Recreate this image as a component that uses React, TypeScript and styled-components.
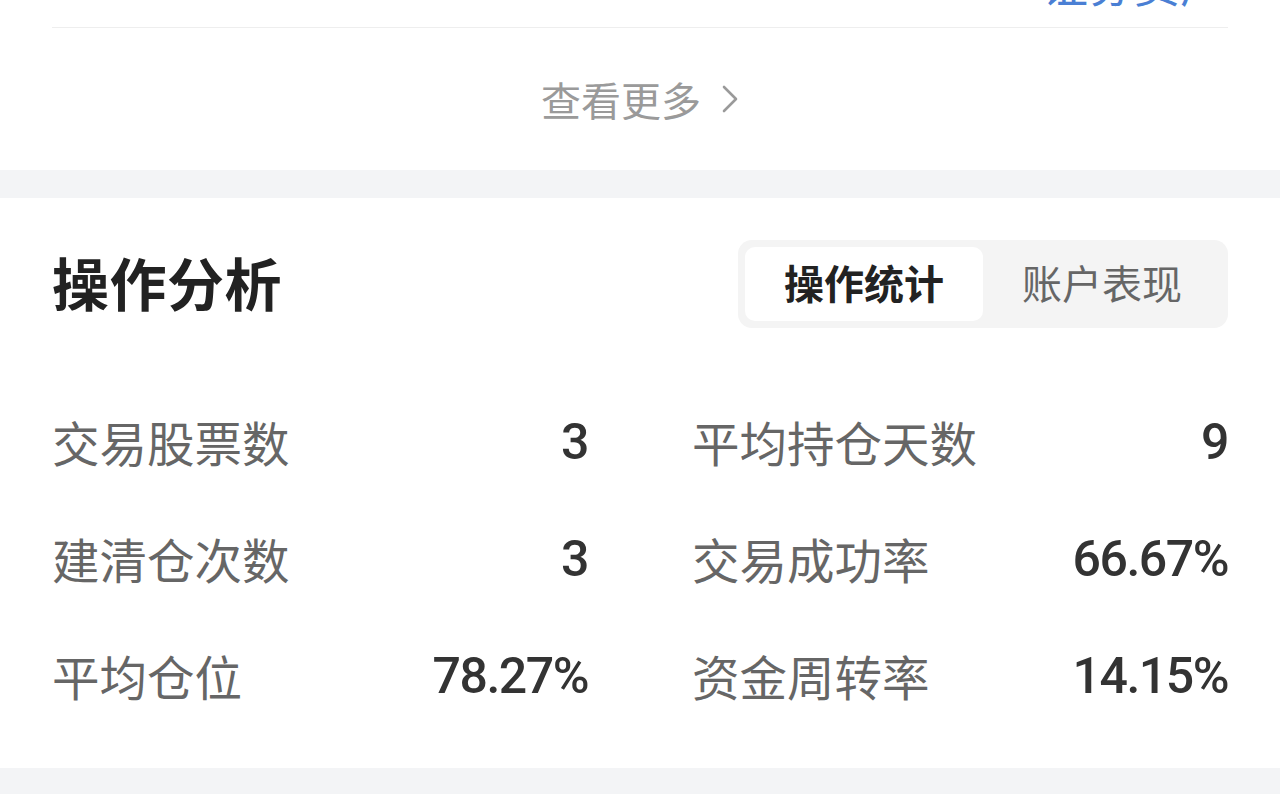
import styled, { createGlobalStyle } from "styled-components";

const GlobalStyle = createGlobalStyle`
  html, body {
    margin: 0;
    padding: 0;
    background: #ffffff;
    font-family: "Noto Sans CJK SC", "Noto Sans", sans-serif;
  }
  * {
    box-sizing: border-box;
  }
`;

const Page = styled.div`
  width: 1280px;
  height: 794px;
  overflow: hidden;
  display: flex;
  flex-direction: column;
  background: #f3f4f6;
`;

const TopCard = styled.section`
  background: #ffffff;
  padding: 0 52px;
  height: 170px;
  display: flex;
  flex-direction: column;
`;

// the row above is scrolled off; only the bottom of its link shows
const CutRow = styled.div`
  height: 28px;
  display: flex;
  justify-content: flex-end;
  align-items: flex-start;
  border-bottom: 1px solid #eeeeee;
`;

const CutLink = styled.span`
  font-size: 46px;
  line-height: 46px;
  color: #4a7fd4;
  margin-top: -41px;
  margin-right: 2px;
`;

const MoreRow = styled.div`
  flex: 1;
  display: flex;
  align-items: center;
  justify-content: center;
  gap: 20px;
  color: #9a9a9a;
  font-size: 40px;
  line-height: 1;
`;

const Band = styled.div<{ $h: number }>`
  height: ${(p) => p.$h}px;
  flex-shrink: 0;
`;

const Card = styled.section`
  background: #ffffff;
  padding: 42px 52px 0;
  height: 570px;
  flex-shrink: 0;
`;

const Header = styled.div`
  display: flex;
  align-items: center;
  justify-content: space-between;
  height: 88px;
`;

const Title = styled.h2`
  margin: 0 0 6px;
  font-size: 57px;
  font-weight: 700;
  color: #222222;
  letter-spacing: 0.5px;
`;

const Tabs = styled.div`
  width: 490px;
  height: 88px;
  padding: 7px;
  display: flex;
  background: #f4f4f4;
  border-radius: 14px;
`;

const Tab = styled.div<{ $active?: boolean }>`
  flex: 1;
  display: flex;
  align-items: center;
  justify-content: center;
  border-radius: 10px;
  font-size: 40px;
  padding-bottom: 4px;
  background: ${(p) => (p.$active ? "#ffffff" : "transparent")};
  color: ${(p) => (p.$active ? "#222222" : "#666666")};
  font-weight: ${(p) => (p.$active ? 700 : 400)};
`;

const Stats = styled.div`
  display: grid;
  grid-template-columns: 536px 536px;
  column-gap: 104px;
  margin-top: 55px;
`;

const Stat = styled.div`
  height: 117px;
  display: flex;
  align-items: center;
  justify-content: space-between;
`;

const Label = styled.span`
  font-size: 47.5px;
  color: #666666;
`;

const Value = styled.span`
  font-family: Roboto, "Noto Sans", sans-serif;
  font-size: 50px;
  font-weight: 500;
  letter-spacing: -1.5px;
  color: #333333;
`;

const stats: [string, string][] = [
  ["交易股票数", "3"],
  ["平均持仓天数", "9"],
  ["建清仓次数", "3"],
  ["交易成功率", "66.67%"],
  ["平均仓位", "78.27%"],
  ["资金周转率", "14.15%"],
];

const Chevron = () => (
  <svg width="18" height="30" viewBox="0 0 18 30" fill="none">
    <path d="M3 3 L15 15 L3 27" stroke="#9a9a9a" strokeWidth="2.6" strokeLinecap="round" strokeLinejoin="round" />
  </svg>
);

const App = () => {
  return (
    <>
      <GlobalStyle />
      <Page>
        <TopCard>
          <CutRow>
            <CutLink>证券资产</CutLink>
          </CutRow>
          <MoreRow>
            <span>查看更多</span>
            <Chevron />
          </MoreRow>
        </TopCard>
        <Band $h={28} />
        <Card>
          <Header>
            <Title>操作分析</Title>
            <Tabs>
              <Tab $active>操作统计</Tab>
              <Tab>账户表现</Tab>
            </Tabs>
          </Header>
          <Stats>
            {stats.map(([label, value]) => (
              <Stat key={label}>
                <Label>{label}</Label>
                <Value>{value}</Value>
              </Stat>
            ))}
          </Stats>
        </Card>
      </Page>
    </>
  );
};

export default App;
